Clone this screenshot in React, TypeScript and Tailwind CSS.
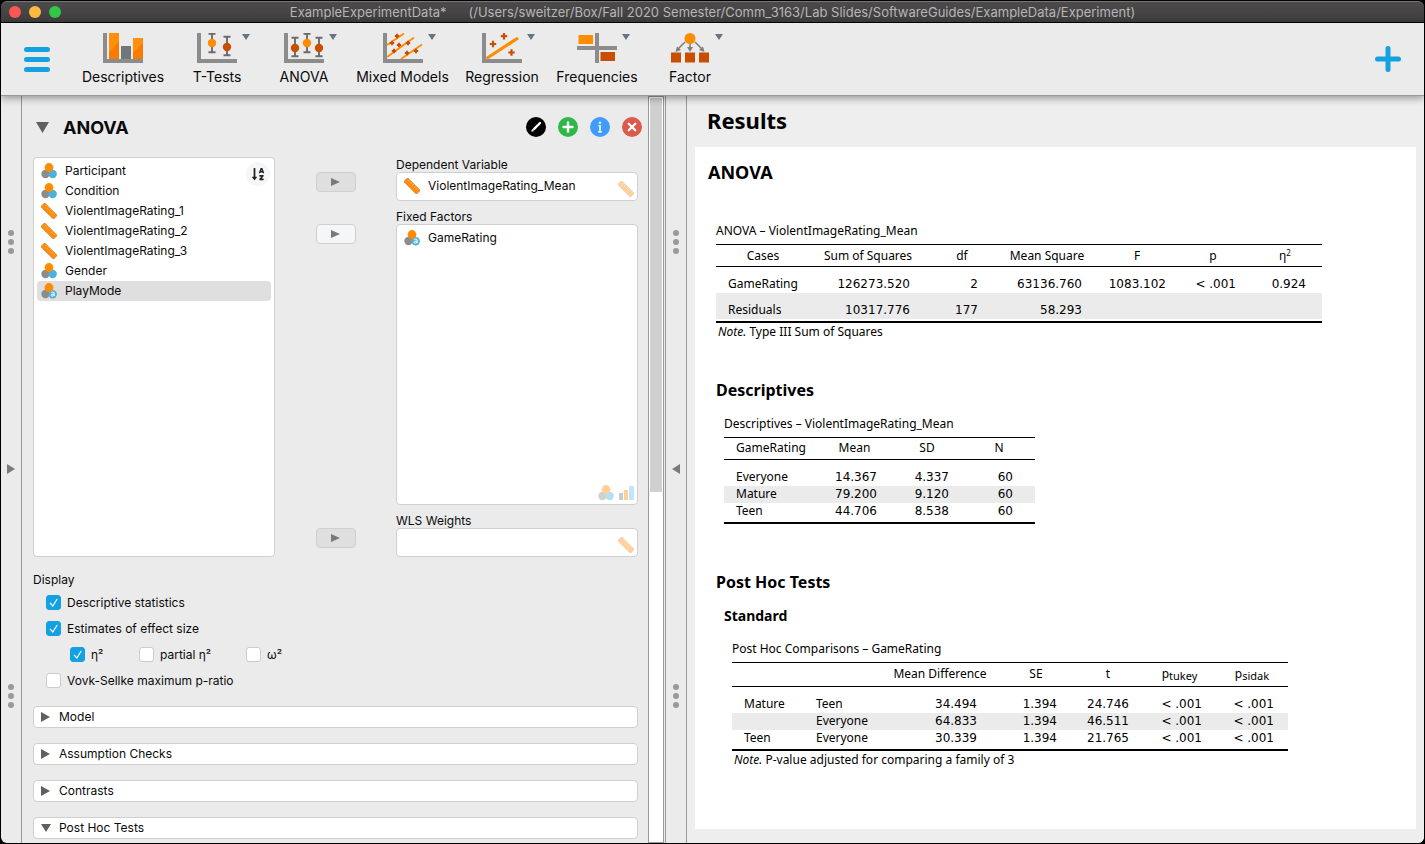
import { useState, type ReactNode } from "react";
import { FaSortAlphaDown } from "react-icons/fa";

/* ---------- toolbar icons ---------- */

const Axes = () => <path d="M0 0h4v26h36v4H0z" fill="#8c8c8c" />;

const Plot = ({ children }: { children: ReactNode }) => (
  <svg viewBox="0 0 40 30" className="h-[30px] w-10" aria-hidden="true">
    {children}
  </svg>
);

const ErrorBar = ({ x, y, h, cy, color }: { x: number; y: number; h: number; cy: number; color: string }) => (
  <g>
    <path d={`M${x - 3.5} ${y + 0.75}h7M${x} ${y}v${h}M${x - 3.5} ${y + h - 0.75}h7`} stroke="#6b6b6b" strokeWidth="1.9" fill="none" />
    <circle cx={x} cy={cy} r="4.2" fill={color} />
  </g>
);

const plus = (x: number, y: number, r: number) => `M${x - r} ${y}h${2 * r}M${x} ${y - r}v${2 * r}`;

const DescriptivesIcon = () => (
  <Plot>
    <Axes />
    <path d="M6 0h10v26H6zM30 5h10v21H30z" fill="#f97c00" />
    <path d="M6 0h10v8L6 20zM30 5h10v5L30 20z" fill="#ff8f0f" />
    <path d="M18 13h10v13H18z" fill="#6f777b" />
  </Plot>
);
const TTestIcon = () => (
  <Plot>
    <Axes />
    <ErrorBar x={15} y={0} h={20} cy={10} color="#ff8c00" />
    <ErrorBar x={30} y={3} h={20} cy={14} color="#c84f00" />
  </Plot>
);
const AnovaIcon = () => (
  <Plot>
    <Axes />
    <ErrorBar x={11} y={4} h={20} cy={15} color="#c84f00" />
    <ErrorBar x={23} y={0} h={20} cy={10} color="#ff8c00" />
    <ErrorBar x={35} y={4} h={20} cy={15} color="#c84f00" />
  </Plot>
);
const MixedIcon = () => (
  <Plot>
    <Axes />
    <path d="M4 12L21 0.500M4 24L31 4.500M18 26L39 11.500" stroke="#ff8c00" strokeWidth="1.800" fill="none" />
    <path
      d={[plus(14, 3, 2.2), plus(9, 10, 2.2), plus(16, 12, 2.2), plus(25, 10, 2.2), plus(11, 18, 2.2), plus(24, 20, 2.2), plus(33, 18, 2.2)].join("")}
      stroke="#c84f00"
      strokeWidth="1.900"
    />
  </Plot>
);
const RegressionIcon = () => (
  <Plot>
    <Axes />
    <path d="M4.500 25.500L36 5" stroke="#ff8c00" strokeWidth="3.200" />
    <path d={[plus(11, 11, 3.2), plus(22, 3.2, 3.2), plus(29.5, 19.5, 3.2)].join("")} stroke="#c84f00" strokeWidth="2.200" />
  </Plot>
);
const FrequenciesIcon = () => (
  <Plot>
    <path d="M18 0h4v30h-4zM0 13h40v4H0z" fill="#8c8c8c" />
    <path d="M1.500 2h14.500v9H1.500z" fill="#ff8c00" />
    <path d="M23.500 19H38v9H23.500z" fill="#c84f00" />
  </Plot>
);
const FactorIcon = () => (
  <Plot>
    <path d="M15 9L7 17M20 9v8M25 9l8 8" stroke="#7f7f7f" strokeWidth="1.600" />
    <path d="M5.500 19l1.500-5.500 4 3.500zM17 14h6l-3 5zM34.500 19l-1.500-5.500-4 3.500z" fill="#7f7f7f" />
    <circle cx="20" cy="5.500" r="5.500" fill="#ff8c00" />
    <path d="M1 19.500h10v10H1zM15 19.500h10v10H15zM29 19.500h10v10H29z" fill="#c84f00" />
  </Plot>
);

/* ---------- small icons ---------- */

type Kind = "nominal" | "text" | "scale" | "ordinal";

const KindIcon = ({ kind, faded = false }: { kind: Kind; faded?: boolean }) => (
  <svg viewBox="0 0 16 16" className={faded ? "size-4 shrink-0 opacity-40" : "size-4 shrink-0"} aria-hidden="true">
    {kind === "scale" && (
      <g transform="rotate(45 8 8)">
        <rect x="-1" y="5.200" width="18" height="5.600" fill="#ff8c0a" stroke="#c98a4b" strokeWidth="0.600" />
        <path d="M2 5.500v2M5 5.500v2.500M8 5.500v2M11 5.500v2.500M14 5.500v2" stroke="#ffc584" strokeWidth="0.800" />
      </g>
    )}
    {kind === "ordinal" && (
      <g>
        <path d="M1 8h4v7H1z" fill="#7f7f7f" />
        <path d="M6 5h4v10H6z" fill="#ff8c00" />
        <path d="M11 1h5v14h-5z" fill="#5ec8f5" />
      </g>
    )}
    {(kind === "nominal" || kind === "text") && (
      <g>
        <circle cx="4.500" cy="11" r="4.200" fill="#8c8c8c" />
        {kind === "nominal" ? (
          <circle cx="11.700" cy="11" r="4.200" fill="#4fb0dc" />
        ) : (
          <g>
            <circle cx="11.700" cy="11.200" r="4.200" fill="#4fb0dc" />
            <path d="M10.200 9.600c.6-.9 3-.9 3 .6v3M13.200 11.200c-1.400-.2-3.200 0-3.200 1.100s2.400 1.100 3.200-.3" stroke="#fff" strokeWidth="1" fill="none" />
          </g>
        )}
        <circle cx="8" cy="4.500" r="4.400" fill="#ff8c00" />
      </g>
    )}
  </svg>
);

const Tri = ({ dir, className }: { dir: "right" | "down" | "left"; className: string }) => (
  <svg viewBox="0 0 10 10" preserveAspectRatio="none" className={className} aria-hidden="true">
    <path d={dir === "right" ? "M0 0L10 5L0 10z" : dir === "left" ? "M10 0L0 5L10 10z" : "M0 0H10L5 10z"} fill="currentColor" />
  </svg>
);

const Dots = () => (
  <div className="flex flex-col gap-[3px]">
    {[0, 1, 2].map((i) => (
      <span key={i} className="size-1.5 rounded-full bg-[#999]" />
    ))}
  </div>
);

/* ---------- form parts ---------- */

const Assign = ({ enabled = false, label }: { enabled?: boolean; label: string }) => (
  <button
    type="button"
    aria-label={label}
    className={
      "flex h-5 w-10 items-center justify-center rounded border border-[#cfcfcf] text-[#7a7a7a] " +
      (enabled ? "bg-[#f5f6f8]" : "bg-[#dfdfdf]")
    }
  >
    <Tri dir="right" className="h-2 w-[9px]" />
  </button>
);

const Check = ({ label, on = false }: { label: string; on?: boolean }) => {
  const [checked, setChecked] = useState(on);
  return (
    <label className="flex h-[26px] items-center gap-1.5">
      <span className="relative flex size-[15px]">
        <input
          type="checkbox"
          checked={checked}
          onChange={(e) => setChecked(e.target.checked)}
          className="size-[15px] appearance-none rounded-[3px] border border-[#cccccc] bg-white checked:border-[#14a1e3] checked:bg-[#14a1e3]"
        />
        {checked && (
          <svg viewBox="0 0 15 15" className="pointer-events-none absolute inset-0" aria-hidden="true">
            <path d="M4 7.800L6.800 11L11.200 4" stroke="#fff" strokeWidth="1.200" fill="none" />
          </svg>
        )}
      </span>
      <span className="pt-0.5">{label}</span>
    </label>
  );
};

const Section = ({ title, open = false }: { title: string; open?: boolean }) => (
  <button type="button" aria-expanded={open} className="flex h-[22px] w-full shrink-0 items-center rounded-[4px] border border-[#cfcfcf] bg-white pl-[7px] text-left">
    <span className="flex w-[18px] text-[#606060]">
      <Tri dir={open ? "down" : "right"} className={open ? "h-2 w-2.5" : "h-2.5 w-[9px]"} />
    </span>
    {title}
  </button>
);

const variables: { name: string; kind: Kind; selected?: boolean }[] = [
  { name: "Participant", kind: "nominal" },
  { name: "Condition", kind: "nominal" },
  { name: "ViolentImageRating_1", kind: "scale" },
  { name: "ViolentImageRating_2", kind: "scale" },
  { name: "ViolentImageRating_3", kind: "scale" },
  { name: "Gender", kind: "nominal" },
  { name: "PlayMode", kind: "text", selected: true },
];

const Variable = ({ name, kind, selected }: { name: string; kind: Kind; selected?: boolean }) => (
  <li className={"flex h-5 items-center gap-2 rounded px-1 " + (selected ? "bg-[#dfdfdf]" : "")}>
    <KindIcon kind={kind} />
    {name}
  </li>
);

const menus = [
  { label: "Descriptives", Icon: DescriptivesIcon, width: "w-[94px]", menu: false },
  { label: "T-Tests", Icon: TTestIcon, width: "w-[94px]", menu: true },
  { label: "ANOVA", Icon: AnovaIcon, width: "w-20", menu: true },
  { label: "Mixed Models", Icon: MixedIcon, width: "w-[117px]", menu: true },
  { label: "Regression", Icon: RegressionIcon, width: "w-[82px]", menu: true },
  { label: "Frequencies", Icon: FrequenciesIcon, width: "w-[108px]", menu: true },
  { label: "Factor", Icon: FactorIcon, width: "w-[78px]", menu: true },
];

/* ---------- results ---------- */

type Col = { head: ReactNode; width: string; cell: string };

const ResultTable = ({
  title,
  cols,
  rows,
  width,
  roomy = false,
  headClass,
  note,
}: {
  title: string;
  cols: Col[];
  rows: string[][];
  width: string;
  roomy?: boolean;
  headClass: string;
  note?: string;
}) => (
  <div className={width}>
    <table className="w-full table-fixed border-collapse">
      <caption className="pb-[5px] text-left leading-4 whitespace-nowrap">{title}</caption>
      <colgroup>
        {cols.map((c, i) => (
          <col key={i} className={c.width} />
        ))}
      </colgroup>
      <thead>
        <tr className={"border-y border-black " + headClass}>
          {cols.map((c, i) => (
            <th key={i} className="p-0 text-center font-normal whitespace-nowrap">
              {c.head}
            </th>
          ))}
        </tr>
      </thead>
      <tbody
        className={
          "border-b-2 border-black leading-4 after:block after:h-[2px] " + (roomy ? "" : "before:block before:h-[9px]")
        }
      >
        {rows.map((r, i) => (
          <tr key={i} className={(roomy ? "h-[26px]" : "h-[17px]") + (i % 2 ? " bg-[#ebebeb]" : "")}>
            {r.map((v, j) => (
              <td
                key={j}
                className={
                  "pb-0 align-baseline whitespace-nowrap " +
                  (roomy ? "pt-[9px] " : "pt-0 ") +
                  (/^[<\d]/.test(v) ? "font-['DejaVu_Sans',sans-serif] " : "") +
                  cols[j].cell
                }
              >
                {v}
              </td>
            ))}
          </tr>
        ))}
      </tbody>
    </table>
    {note && (
      <p className="pt-px pl-0.5 leading-4">
        <em>Note.</em> {note}
      </p>
    )}
  </div>
);

const Eta = () => (
  <>
    η<span className="relative -top-1 text-[8px]">2</span>
  </>
);
const P = ({ sub }: { sub: string }) => (
  <>
    p<span className="relative top-0.5 text-[11px]">{sub}</span>
  </>
);

export default function App() {
  return (
    <div className="flex h-screen flex-col bg-black p-px font-['Inter',sans-serif] text-[12px] text-[#0a0a0a]">
      <header className="grid h-[21px] shrink-0 grid-cols-[60px_1fr_60px] items-center rounded-t-md border-t border-[#777] bg-linear-to-b from-[#4d4a4b] to-[#3f3d3e] px-2">
        <div className="flex gap-2">
          <button type="button" aria-label="Close" className="size-3 rounded-full bg-[#fc5753]" />
          <button type="button" aria-label="Minimize" className="size-3 rounded-full bg-[#fdbc40]" />
          <button type="button" aria-label="Zoom" className="size-3 rounded-full bg-[#33c748]" />
        </div>
        <h1 className="text-center text-[13px] leading-5 whitespace-pre text-[#b7b5b6]">
          ExampleExperimentData*      (/Users/sweitzer/Box/Fall 2020 Semester/Comm_3163/Lab Slides/SoftwareGuides/ExampleData/Experiment)
        </h1>
      </header>

      <nav className="relative z-10 mt-px flex h-[73px] shrink-0 items-center border-b border-[#999] bg-[#ebebeb] shadow-[0_2px_8px_rgba(0,0,0,0.4)]">
        <button type="button" aria-label="Main menu" className="ml-[23px] flex w-[26px] flex-col gap-[5px]">
          <span className="h-[5px] rounded-full bg-[#14a1e3]" />
          <span className="h-[5px] rounded-full bg-[#14a1e3]" />
          <span className="h-[5px] rounded-full bg-[#14a1e3]" />
        </button>
        <div className="ml-[26px] flex flex-1 pt-0.5">
          {menus.map(({ label, Icon, width, menu }) => (
            <button key={label} type="button" className={"flex flex-col items-center gap-1 text-[14px] leading-5 whitespace-nowrap " + width}>
              <span className="relative">
                <Icon />
                {menu && <Tri dir="down" className="absolute top-px left-[45px] h-1.5 w-2 text-[#66757f]" />}
              </span>
              {label}
            </button>
          ))}
        </div>
        <button type="button" aria-label="Add module" className="mr-[23px]">
          <svg viewBox="0 0 26 26" className="size-[26px]" aria-hidden="true">
            <path d="M13 2.500v21M2.500 13h21" stroke="#14a1e3" strokeWidth="5" strokeLinecap="round" />
          </svg>
        </button>
      </nav>

      <main className="flex min-h-0 flex-1 overflow-hidden rounded-b-md bg-[#ebebeb]">
        <div className="flex w-[21px] shrink-0 flex-col items-center justify-between border-r border-[#999] pt-[134px] pb-[135px]">
          <Dots />
          <button type="button" aria-label="Show data" className="text-[#7a7a7a]">
            <Tri dir="right" className="h-2.5 w-2" />
          </button>
          <Dots />
        </div>

        <section className="flex w-[626px] shrink-0 flex-col overflow-hidden pr-2.5 pl-[11px]">
          <div className="flex h-[60px] shrink-0 items-center pt-[2px]">
            <Tri dir="down" className="ml-[3px] h-[11px] w-[13px] text-[#606060]" />
            <h2 className="ml-3.5 flex-1 text-[18px] font-bold">ANOVA</h2>
            <div className="-mr-1 flex gap-3">
              <button type="button" aria-label="Rename analysis">
                <svg viewBox="0 0 20 20" className="size-5">
                  <circle cx="10" cy="10" r="10" fill="#000" />
                  <path d="M8.200 11.800L14 6" stroke="#fff" strokeWidth="2.400" strokeLinecap="round" />
                  <path d="M5.300 14.700l.8-2.900 2.100 2.100z" fill="#fff" />
                </svg>
              </button>
              <button type="button" aria-label="Duplicate analysis">
                <svg viewBox="0 0 20 20" className="size-5">
                  <circle cx="10" cy="10" r="10" fill="#2fb848" />
                  <path d="M10 5.500v9M5.500 10h9" stroke="#fff" strokeWidth="2.400" strokeLinecap="round" />
                </svg>
              </button>
              <button type="button" aria-label="Help">
                <svg viewBox="0 0 20 20" className="size-5">
                  <circle cx="10" cy="10" r="10" fill="#419bf9" />
                  <path d="M8.500 8.800H10v6M8.200 14.800h3.600" stroke="#e4f1ff" strokeWidth="1.800" fill="none" />
                  <circle cx="10" cy="5.800" r="1.300" fill="#e4f1ff" />
                </svg>
              </button>
              <button type="button" aria-label="Remove analysis">
                <svg viewBox="0 0 20 20" className="size-5">
                  <circle cx="10" cy="10" r="10" fill="#da5a4b" />
                  <path d="M6.700 6.700l6.600 6.600M13.300 6.700l-6.600 6.600" stroke="#fff" strokeWidth="2.200" strokeLinecap="round" />
                </svg>
              </button>
            </div>
          </div>

          <div className="flex shrink-0 justify-between">
            <div className="relative mt-px h-[400px] w-[242px] rounded-[4px] border border-[#cfcfcf] bg-white p-[3px]">
              <ul>
                {variables.map((v) => (
                  <Variable key={v.name} {...v} />
                ))}
              </ul>
              <button type="button" aria-label="Sort variables" className="absolute top-1 right-1 flex size-6 items-center justify-center rounded-full bg-[#f5f6f8]">
                <FaSortAlphaDown className="size-3.5 text-[#222]" />
              </button>
            </div>
            <div className="flex flex-col pt-4">
              <Assign label="Assign dependent variable" />
              <div className="flex flex-1 flex-col justify-between pt-8 pb-[9px]">
                <Assign label="Assign fixed factor" enabled />
                <Assign label="Assign WLS weights" />
              </div>
            </div>
            <div className="flex w-[242px] flex-col">
              <h3 className="h-4 leading-[18px]">Dependent Variable</h3>
              <ul className="relative h-[29px] rounded-[4px] border border-[#cfcfcf] bg-white p-[3px]">
                <Variable name="ViolentImageRating_Mean" kind="scale" />
                <li className="absolute right-[3px] bottom-[3px]">
                  <KindIcon kind="scale" faded />
                </li>
              </ul>
              <h3 className="mt-[7px] h-4 leading-[18px]">Fixed Factors</h3>
              <ul className="relative h-[281px] rounded-[4px] border border-[#cfcfcf] bg-white p-[3px]">
                <Variable name="GameRating" kind="text" />
                <li className="absolute right-[3px] bottom-[3px] flex gap-1">
                  <KindIcon kind="nominal" faded />
                  <KindIcon kind="ordinal" faded />
                </li>
              </ul>
              <h3 className="mt-[7px] h-4 leading-[18px]">WLS Weights</h3>
              <ul className="relative h-[29px] rounded-[4px] border border-[#cfcfcf] bg-white">
                <li className="absolute right-[3px] bottom-[3px]">
                  <KindIcon kind="scale" faded />
                </li>
              </ul>
            </div>
          </div>

          <fieldset className="mt-3.5 shrink-0">
            <legend className="leading-[18px]">Display</legend>
            <div className="pl-[13px]">
              <Check label="Descriptive statistics" on />
              <Check label="Estimates of effect size" on />
              <div className="grid grid-cols-[69px_107px_auto] pl-6">
                <Check label="η²" on />
                <Check label="partial η²" />
                <Check label="ω²" />
              </div>
              <Check label="Vovk-Sellke maximum p-ratio" />
            </div>
          </fieldset>

          <div className="mt-[13px] flex shrink-0 flex-col gap-[15px]">
            <Section title="Model" />
            <Section title="Assumption Checks" />
            <Section title="Contrasts" />
            <Section title="Post Hoc Tests" open />
          </div>
        </section>

        <div className="w-4 shrink-0 border border-[#999] bg-white p-px">
          <div className="h-[53%] bg-[#d0d0d0]" />
        </div>

        <div className="ml-px flex w-[22px] shrink-0 flex-col items-center justify-between border-x border-[#999] pt-[134px] pb-[135px]">
          <Dots />
          <button type="button" aria-label="Hide results" className="text-[#7a7a7a]">
            <Tri dir="left" className="h-2.5 w-2" />
          </button>
          <Dots />
        </div>

        <section className="flex min-w-0 flex-1 flex-col bg-[#eee] px-2 pb-3.5 font-['Noto_Sans',sans-serif] text-black">
          <h2 className="pt-[11px] pb-[13px] pl-3 text-[22px] leading-[27px] font-bold">Results</h2>
          <div className="flex-1 overflow-hidden bg-white pl-[13px]">
            <h3 className="mt-[11px] text-[18px] leading-7 font-bold">ANOVA</h3>
            <div className="mt-[37px] pl-2">
              <ResultTable
                title="ANOVA – ViolentImageRating_Mean"
                width="w-[606px]"
                headClass="h-[22px]"
                roomy
                cols={[
                  { head: "Cases", width: "w-[94px]", cell: "pl-3" },
                  { head: "Sum of Squares", width: "w-[116px]", cell: "pr-4 text-right" },
                  { head: "df", width: "w-[72px]", cell: "pr-5 text-right" },
                  { head: "Mean Square", width: "w-[98px]", cell: "pr-3.5 text-right" },
                  { head: "F", width: "w-[82px]", cell: "pr-3 text-right" },
                  { head: "p", width: "w-[70px]", cell: "pr-3 text-right" },
                  { head: <Eta />, width: "w-[74px]", cell: "pr-4 text-right" },
                ]}
                rows={[
                  ["GameRating", "126273.520", "2", "63136.760", "1083.102", "< .001", "0.924"],
                  ["Residuals", "10317.776", "177", "58.293", "", "", ""],
                ]}
                note="Type III Sum of Squares"
              />

              <h4 className="mt-[38px] text-[16px] leading-6 font-bold">Descriptives</h4>
              <div className="mt-3.5 pl-2">
                <ResultTable
                  title="Descriptives – ViolentImageRating_Mean"
                  width="w-[311px]"
                  headClass="h-[22px]"
                  cols={[
                    { head: "GameRating", width: "w-[94px]", cell: "pl-3" },
                    { head: "Mean", width: "w-[73px]", cell: "pr-3.5 text-right" },
                    { head: "SD", width: "w-[72px]", cell: "pr-3.5 text-right" },
                    { head: "N", width: "w-[72px]", cell: "pr-[22px] text-right" },
                  ]}
                  rows={[
                    ["Everyone", "14.367", "4.337", "60"],
                    ["Mature", "79.200", "9.120", "60"],
                    ["Teen", "44.706", "8.538", "60"],
                  ]}
                />
              </div>

              <h4 className="mt-[46px] text-[16px] leading-6 font-bold">Post Hoc Tests</h4>
              <div className="pl-2">
                <h5 className="mt-3 text-[14px] leading-5 font-bold">Standard</h5>
                <div className="mt-[15px] pl-2">
                  <ResultTable
                    title="Post Hoc Comparisons – GameRating"
                    width="w-[556px]"
                    headClass="h-6"
                    cols={[
                      { head: "", width: "w-[72px]", cell: "pl-3" },
                      { head: "", width: "w-[77px]", cell: "pl-3" },
                      { head: "Mean Difference", width: "w-[118px]", cell: "pr-[22px] text-right" },
                      { head: "SE", width: "w-[74px]", cell: "pr-4 text-right" },
                      { head: "t", width: "w-[70px]", cell: "pr-3.5 text-right" },
                      { head: <P sub="tukey" />, width: "w-[73px]", cell: "pr-3.5 text-right" },
                      { head: <P sub="sidak" />, width: "w-[72px]", cell: "pr-3.5 text-right" },
                    ]}
                    rows={[
                      ["Mature", "Teen", "34.494", "1.394", "24.746", "< .001", "< .001"],
                      ["", "Everyone", "64.833", "1.394", "46.511", "< .001", "< .001"],
                      ["Teen", "Everyone", "30.339", "1.394", "21.765", "< .001", "< .001"],
                    ]}
                    note="P-value adjusted for comparing a family of 3"
                  />
                </div>
              </div>
            </div>
          </div>
        </section>
      </main>
    </div>
  );
}
